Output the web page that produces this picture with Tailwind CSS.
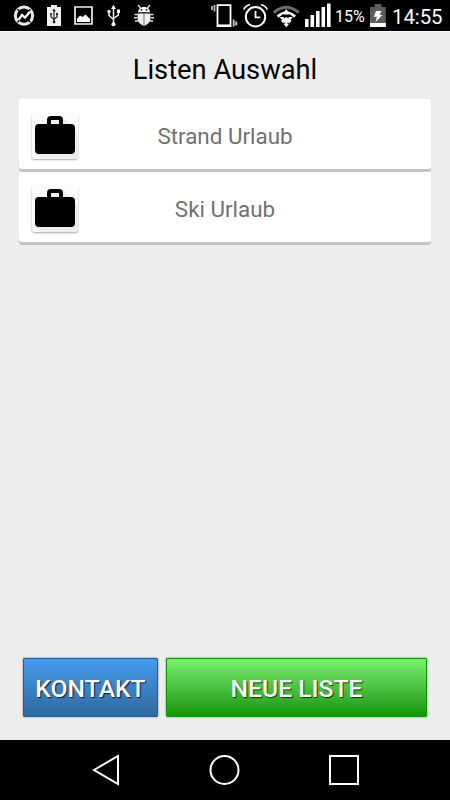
<!DOCTYPE html>
<html lang="de">
<head>
<meta charset="utf-8">
<meta name="viewport" content="width=device-width, initial-scale=1">
<title>Listen Auswahl</title>
<script src="https://cdn.jsdelivr.net/npm/@tailwindcss/browser@4"></script>
</head>
<body class="w-[450px] h-[800px] overflow-hidden flex flex-col bg-[#ededed] font-['Roboto',sans-serif]">
<header class="h-[31px] shrink-0 bg-black text-white flex items-start justify-between pl-[13px] pr-[9px]">
  <div class="flex">
    <svg class="w-[22px] h-[31px]" viewBox="13 0 22 31" fill="none">
      <circle cx="24" cy="15.700" r="8.600" stroke="#e8e8e8" stroke-width="3"/>
      <path d="M17.500 9.200l2.600 2.600M30.500 9.200l-2.600 2.600M17.500 22.200l2.600-2.600M30.500 22.200l-2.600-2.600" stroke="#000" stroke-width="1.300"/>
      <path d="M18.500 20l3.500-5 3 2.700 4.800-6" stroke="#fff" stroke-width="2.300"/>
    </svg>
    <svg class="w-[14px] h-[31px] ml-[12px]" viewBox="47 0 14 31">
      <path d="M51 5h6v2h4v19H47V7h4z" fill="#f2f2f2"/>
      <path d="M54 10v12M51 14v3l3 2.500 3-2.500v-3" fill="none" stroke="#222" stroke-width="1.200"/>
      <path d="M54 8.500l1.800 2.800h-3.600z" fill="#222"/><circle cx="54" cy="22" r="1.400" fill="#222"/><circle cx="51" cy="14" r="1.100" fill="#222"/><path d="M56 13h2v2h-2z" fill="#222"/>
    </svg>
    <svg class="w-[20px] h-[31px] ml-[13px]" viewBox="74 0 20 31">
      <path d="M75 7h17v17H75z" fill="none" stroke="#efefef" stroke-width="1.700"/>
      <path d="M77 22v-3l3-3.500 2.500 1.500 3-2.500 4.500 4.500v3z" fill="#fff"/>
    </svg>
    <svg class="w-[14px] h-[31px] ml-[13px]" viewBox="107 0 14 31">
      <path d="M113.500 8v16M109 12v3.500l4.500 4M118.300 12v3l-4.800 3.500" fill="none" stroke="#eee" stroke-width="1.500"/>
      <path d="M113.500 4.700l2.500 4.300h-5zM117 9.500h3v3.500h-3z" fill="#fff"/><circle cx="109" cy="11.500" r="1.700" fill="#fff"/><circle cx="113.500" cy="24.300" r="2" fill="#fff"/>
    </svg>
    <svg class="w-[20px] h-[31px] ml-[13px]" viewBox="134 0 20 31">
      <path d="M138 5l2.500 3M150 5l-2.500 3M134.500 14.500h3M150.500 14.500h3M134 17.700h3M151 17.700h3M135 21h3M150 21h3" stroke="#ddd" stroke-width="1.500"/>
      <path d="M138 12.200c.5-7 11.500-7 12 0z" fill="#fff"/>
      <path d="M137.500 13.500h13v5q0 5-6.500 7.400q-6.500-2.400-6.500-7.400z" fill="#eee"/>
      <path d="M144 13.500V26" stroke="#777" stroke-width="1"/><circle cx="141.500" cy="9.800" r=".9"/><circle cx="146.500" cy="9.800" r=".9"/>
    </svg>
  </div>
  <div class="flex">
    <svg class="w-[27px] h-[31px]" viewBox="211 0 27 31" fill="none">
      <path d="M217.500 5.200h13v21h-13z" stroke="#fff" stroke-width="1.800"/><path d="M217 25.700h14" stroke="#fff" stroke-width="2.500"/>
      <path d="M212 6v4M214.500 5v6.500" stroke="#bbb" stroke-width="1.700"/><path d="M233.700 19.500v7M236.200 21.500v4" stroke="#bbb" stroke-width="2"/>
    </svg>
    <svg class="w-[26px] h-[31px] ml-[5px]" viewBox="243 0 26 31" fill="none" stroke="#fff">
      <circle cx="255.500" cy="16.800" r="9.700" stroke-width="2"/><path d="M255.500 11v6.300h4.800" stroke-width="1.800"/><path d="M243.700 9.500q1.500-3.500 6.300-5M267.300 9.500q-1.500-3.500-6.300-5" stroke-width="1.700"/>
    </svg>
    <svg class="w-[27px] h-[31px] ml-[4px]" viewBox="273 0 27 31" fill="none">
      <path d="M273.800 12.500q12.500-10.500 25 0" stroke="#6b6b6b" stroke-width="3"/>
      <path d="M277.500 16.500q8.800-7.500 17.600 0" stroke="#fff" stroke-width="2.600"/>
      <path d="M281 20.800l5.300-3.800 5.300 3.800-5.300 6.400z" fill="#fff"/>
      <path d="M286.300 9l4 5.500h-8zM279.500 17h4.500v5zM293 17h-4.500v5z" fill="#fff"/><path d="M282 15h3M287.600 15h3M283 23.200h2.300M287.300 23.200h2.300" stroke="#000"/>
    </svg>
    <svg class="w-[26px] h-[31px] ml-[5px]" viewBox="305 0 26 31" fill="#fff">
      <path d="M305 19h3.600v8H305zM310.500 15h3.600v12h-3.600zM316 11h3.600v16H316zM321.500 7h3.600v20h-3.600zM327 3.500h3.600V27H327z"/>
    </svg>
    <span class="ml-[4px] mt-[7px] w-[31px] text-[16px] leading-[19px] whitespace-nowrap">15%</span>
    <svg class="w-[16px] h-[31px] ml-[4px]" viewBox="370 0 16 31">
      <path d="M374.500 4h7v3h4.300v19.500H370V7h4.500z" fill="#5c5c5c"/><path d="M370 23h15.800v4H370z" fill="#fff"/>
      <path d="M376 11h5.500l-2 4h3l-7 7 1.500-5.200h-3.300z" fill="#fff"/>
    </svg>
    <span class="ml-[6px] mt-[5px] w-[49px] text-[20.300px] leading-[24px] whitespace-nowrap">14:55</span>
  </div>
</header>
<main class="flex-1 flex flex-col px-[19px] border-t border-[#fafafa]">
  <h1 class="mt-[21px] h-[34px] text-center text-[27.300px] leading-[34px] text-black whitespace-nowrap">Listen Auswahl</h1>
  <ul class="mt-[12px] flex flex-col gap-[3px] w-[412px]">
    <li class="h-[70px] rounded-[3px] bg-white shadow-[0_3px_0_#c5c5c5] flex items-center">
      <div class="ml-[13px] mt-[4px] w-[46px] h-[46px] rounded-[3px] bg-[#fcfcfc] shadow-[0_1px_2px_#a8a8a8]">
        <svg class="w-[46px] h-[46px]" viewBox="1 1 46 46"><path d="M32 5l15 15v24q0 3-3 3H10L4 41z" fill="#ededed"/><path d="M18 13V8q0-2 2-2h8q2 0 2 2v5" fill="#f0f0f0" stroke="#000" stroke-width="4"/><rect x="4" y="12" width="40" height="30" rx="4"/></svg>
      </div>
      <span class="w-[294px] text-center text-[22.400px] leading-[28px] mt-[4px] text-[#707070] whitespace-nowrap">Strand Urlaub</span>
    </li>
    <li class="h-[70px] rounded-[3px] bg-white shadow-[0_3px_0_#c5c5c5] flex items-center">
      <div class="ml-[13px] mt-[4px] w-[46px] h-[46px] rounded-[3px] bg-[#fcfcfc] shadow-[0_1px_2px_#a8a8a8]">
        <svg class="w-[46px] h-[46px]" viewBox="1 1 46 46"><path d="M32 5l15 15v24q0 3-3 3H10L4 41z" fill="#ededed"/><path d="M18 13V8q0-2 2-2h8q2 0 2 2v5" fill="#f0f0f0" stroke="#000" stroke-width="4"/><rect x="4" y="12" width="40" height="30" rx="4"/></svg>
      </div>
      <span class="w-[294px] text-center text-[22.400px] leading-[28px] mt-[4px] text-[#707070] whitespace-nowrap">Ski Urlaub</span>
    </li>
  </ul>
  <div class="mt-auto mb-[23px] ml-[4px] flex gap-[8px]">
    <button class="w-[135px] h-[59px] rounded-[1px] border border-[#20609b] bg-linear-to-b from-[#459cf0] to-[#30699e] shadow-[0_0_2px_#777] text-white font-medium text-[24.700px] whitespace-nowrap pt-[3px] [text-shadow:1px_1px_1px_#001842]">KONTAKT</button>
    <button class="w-[261px] h-[59px] rounded-[1px] border border-[#0b9700] bg-linear-to-b from-[#7af06e] to-[#109400] shadow-[0_0_2px_#777] text-white font-medium text-[24.700px] whitespace-nowrap pt-[3px] [text-shadow:1px_1px_1px_#063f00]">NEUE LISTE</button>
  </div>
</main>
<nav class="h-[60px] shrink-0 bg-black flex items-center justify-between pl-[92px] pr-[90px]">
  <svg class="w-[28px] h-[32px]" viewBox="92 754 28 32" fill="none" stroke="#fff" stroke-width="2"><path d="M94 770l24-14v28z"/></svg>
  <svg class="w-[32px] h-[32px]" viewBox="208 754 32 32" fill="none" stroke="#fff" stroke-width="2"><circle cx="224.500" cy="770" r="14"/></svg>
  <svg class="w-[32px] h-[32px]" viewBox="328 754 32 32" fill="none" stroke="#fff" stroke-width="2"><path d="M330 756h28v28h-28z"/></svg>
</nav>
</body>
</html>
